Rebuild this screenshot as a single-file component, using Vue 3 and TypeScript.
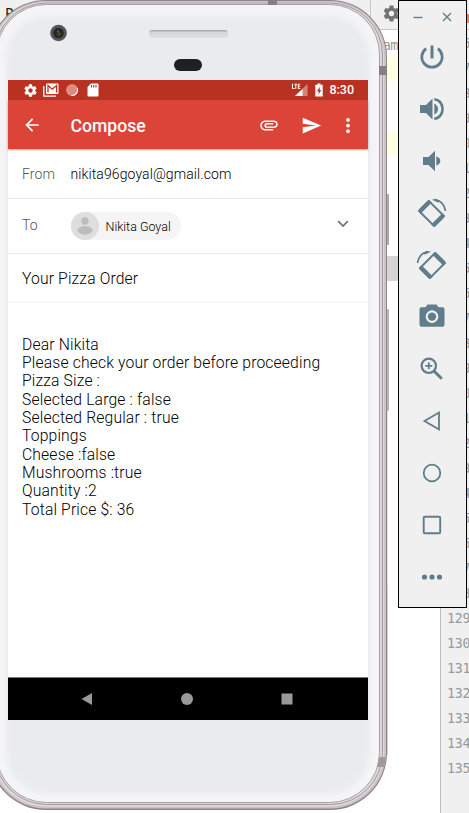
<script setup lang="ts">
const lineNumbers: number[] = Array.from({ length: 30 }, (_, i) => 106 + i)

const message: string[] = [
  'Dear Nikita',
  'Please check your order before proceeding',
  'Pizza Size :',
  'Selected Large : false',
  'Selected Regular : true',
  'Toppings',
  'Cheese :false',
  'Mushrooms :true',
  'Quantity :2',
  'Total Price $: 36',
]

const gearPath =
  'M19.43 12.98c.04-.32.07-.64.07-.98s-.03-.66-.07-.98l2.11-1.65c.19-.15.24-.42.12-.64l-2-3.46c-.12-.22-.39-.3-.61-.22l-2.49 1c-.52-.4-1.08-.73-1.69-.98l-.38-2.65C14.46 2.18 14.25 2 14 2h-4c-.25 0-.46.18-.49.42l-.38 2.65c-.61.25-1.17.59-1.69.98l-2.49-1c-.23-.09-.49 0-.61.22l-2 3.46c-.13.22-.07.49.12.64l2.11 1.65c-.04.32-.07.65-.07.98s.03.66.07.98l-2.11 1.65c-.19.15-.24.42-.12.64l2 3.46c.12.22.39.3.61.22l2.49-1c.52.4 1.08.73 1.69.98l.38 2.65c.03.24.24.42.49.42h4c.25 0 .46-.18.49-.42l.38-2.65c.61-.25 1.17-.59 1.69-.98l2.49 1c.23.09.49 0 .61-.22l2-3.46c.12-.22.07-.49-.12-.64l-2.11-1.65zM12 15.5c-1.93 0-3.5-1.57-3.5-3.5s1.57-3.5 3.5-3.5 3.5 1.57 3.5 3.5-1.57 3.5-3.5 3.5z'
</script>

<template>
  <div class="desktop">
    <section class="editor">
      <header class="editor-bar">
        <span class="tab">P</span>
        <span class="bar-tools">
          <svg class="bar-gear" viewBox="0 0 24 24"><path :d="gearPath" /></svg>
          <i class="mark"></i>
        </span>
      </header>
      <div class="code-area">
        <div class="code">
          <span class="param">am</span>
          <i class="band band-a"></i>
          <i class="band band-b"></i>
          <i class="band band-c"></i>
        </div>
        <ol class="gutter">
          <li v-for="n in lineNumbers" :key="n">{{ n }}</li>
        </ol>
      </div>
    </section>

    <section class="phone">
      <svg class="shell" viewBox="0 0 402 813">
        <defs>
          <filter id="soft" x="-5%" y="-5%" width="110%" height="110%">
            <feGaussianBlur stdDeviation="3" />
          </filter>
          <clipPath id="face"><rect x="8" y="5" width="382" height="797" rx="50" /></clipPath>
          <linearGradient id="spk" x1="0" y1="0" x2="0" y2="1">
            <stop offset="0" stop-color="#9aa0a9" />
            <stop offset=".3" stop-color="#d3d5da" />
            <stop offset="1" stop-color="#dfe0e4" />
          </linearGradient>
        </defs>
        <rect x="397" y="194" width="3" height="51" rx="1" fill="#aaa6a8" />
        <rect x="397" y="309" width="3" height="102" rx="1" fill="#b9b6b7" />
        <path d="M398.500 411V585" stroke="#e2dfe1" />
        <rect x="397" y="585" width="1.500" height="170" fill="#aaa4a7" />
        <rect x="0" y="0" width="398" height="810" rx="57" fill="#8d8689" />
        <rect x="1" y="1" width="396" height="807.500" rx="56" fill="#cbc3c6" />
        <rect x="3" y="2" width="392" height="804.500" rx="54" fill="#e0d9dc" />
        <rect x="5.500" y="3" width="388" height="801.500" rx="52" fill="#ddd7da" stroke="#a39b9e" />
        <rect x="7.500" y="4.500" width="383" height="798" rx="50" fill="#f5f5f7" stroke="#a8a2a5" />
        <path d="M279 0h9v5h-9z M390 66h8v9h-8z" fill="#877f82" />
        <path d="M390 757h7l-2 10h-7z" fill="#a19a9d" />
        <g clip-path="url(#face)">
          <rect x="17" y="16" width="364" height="778" rx="42" fill="#eaebed" filter="url(#soft)" />
        </g>
        <circle cx="69.500" cy="33" r="8.300" fill="#55565a" />
        <circle cx="69.500" cy="33" r="5.300" fill="#252629" />
        <circle cx="70" cy="34" r="2" fill="#514519" />
        <circle cx="69" cy="31.500" r="1" fill="#596270" />
        <rect x="160" y="30" width="79" height="8" rx="3" fill="url(#spk)" />
        <rect x="185" y="59" width="28" height="12" rx="6" fill="#1f2024" />
      </svg>

      <div class="screen">
        <div class="status">
          <svg class="s-gear" viewBox="0 0 24 24"><path :d="gearPath" /></svg>
          <svg class="s-mail" viewBox="0 0 16 14">
            <path d="M.8 3v10.200H13" fill="none" stroke="#fff" stroke-width="1.300" />
            <rect x="3" y=".5" width="12.500" height="10.500" rx="1" fill="#fff" />
            <path d="M5 9.500V2.500l4.300 3.700 4.300-3.700v7" fill="none" stroke="#b93221" stroke-width="1.300" />
          </svg>
          <svg class="s-dot" viewBox="0 0 14 14">
            <circle cx="7" cy="7" r="6" fill="#de8a81" />
            <path d="M12.300 5A5.700 5.700 0 0 1 6.500 12.500" fill="none" stroke="#fff" stroke-width="1.200" />
          </svg>
          <svg class="s-sd" viewBox="0 0 12 14">
            <path d="M4 .5h6.500q1 0 1 1v11q0 1-1 1h-9q-1 0-1-1V4z" fill="#fff" />
            <path d="M4.500 2v2.500M6.700 2v2.500M9 2v2.500" stroke="#b93221" stroke-width="1.100" />
          </svg>
          <svg class="s-signal" viewBox="0 0 18 14">
            <path d="M16.500 1v12H4z" fill="#d88379" />
            <path d="M11.500 6v7H4z" fill="#fff" />
            <path d="M1.500.8v4.700h2M3.300 1.300h3M4.800 1.300v4.700M9.200 1.300H7.300v4.200h1.900M7.300 3.400h1.700" fill="none" stroke="#fff" />
          </svg>
          <svg class="s-batt" viewBox="0 0 8 14">
            <path d="M2.500.5h3v1.300h2.200v11.700H.3V1.800h2.200z" fill="#fff" />
            <path d="M4.700 3.800 2 8.200h1.600V11.500L6.200 7H4.700z" fill="#b93221" />
          </svg>
          <span class="clock">8:30</span>
        </div>

        <header class="appbar">
          <svg class="back" viewBox="0 0 24 24"><path d="M20 11H7.830l5.590-5.590L12 4l-8 8 8 8 1.410-1.410L7.830 13H20v-2z" /></svg>
          <h1>Compose</h1>
          <svg class="clip" viewBox="0 0 24 24"><path d="M1.500 12.500C1.500 9.200 4.200 6.500 7.500 6.500H18c2.500 0 4.500 2 4.500 4.500s-2 4.500-4.500 4.500H9.500c-1.700 0-3-1.300-3-3s1.300-3 3-3H17v1.800H9.500c-1.500 0-1.500 2.400 0 2.400H18c1.500 0 2.700-1.200 2.700-2.700S19.500 8.300 18 8.300H7.500c-2.300 0-4.200 1.900-4.200 4.200s1.900 4.200 4.200 4.200H17v1.800H7.500c-3.300 0-6-2.700-6-6z" /></svg>
          <svg class="send" viewBox="0 0 24 24"><path d="M2.010 21L23 12 2.010 3 2 10l15 2-15 2z" /></svg>
          <svg class="more" viewBox="0 0 6 16"><circle cx="3" cy="2" r="2" /><circle cx="3" cy="8" r="2" /><circle cx="3" cy="14" r="2" /></svg>
        </header>

        <div class="row from">
          <span class="label">From</span>
          <span class="address">nikita96goyal@gmail.com</span>
        </div>
        <div class="row to">
          <span class="label">To</span>
          <span class="chip">
            <svg class="avatar" viewBox="0 0 28 28">
              <circle cx="14" cy="14" r="14" fill="#dedede" />
              <circle cx="14" cy="9" r="3.700" fill="#bdbdbd" />
              <ellipse cx="14" cy="18.200" rx="7.500" ry="4.200" fill="#bdbdbd" />
            </svg>
            <span class="chip-name">Nikita Goyal</span>
          </span>
          <svg class="chevron" viewBox="0 0 12 8"><path d="M1.200 1.200 6 6l4.800-4.800" fill="none" stroke="#707070" stroke-width="1.700" /></svg>
        </div>
        <div class="row subject">Your Pizza Order</div>
        <div class="message">
          <p v-for="line in message" :key="line">{{ line }}</p>
        </div>

        <nav class="navbar">
          <svg viewBox="0 0 12 12"><path d="M11 0v12L.5 6z" /></svg>
          <svg viewBox="0 0 12 12"><circle cx="6" cy="6" r="6" /></svg>
          <svg viewBox="0 0 12 12"><rect x=".5" y=".5" width="11" height="11" /></svg>
        </nav>
      </div>
    </section>

    <aside class="toolbar">
      <div class="window-buttons">
        <svg viewBox="0 0 10 10"><path d="M.5 5.500h9" /></svg>
        <svg viewBox="0 0 10 10"><path d="m1 1 8 8M9 1 1 9" /></svg>
      </div>
      <div class="tools">
        <svg viewBox="0 0 28 28"><path d="M14 2.500v13" class="stroke" stroke-width="3" /><path d="M8.200 5.600a10.200 10.200 0 1 0 11.600 0" class="stroke" stroke-width="2.700" /></svg>
        <svg viewBox="0 0 28 28"><path d="M2 10h6l6.500-6.500v21L8 18H2zM16.300 8.500q3.700 2 3.700 5.500t-3.700 5.500z" /><path d="M16.300 4.300c11 1 11 18.400 0 19.400" class="stroke" stroke-width="2.600" /></svg>
        <svg viewBox="0 0 28 28"><path d="M5 10h5.500l6.500-6.200v20.400L10.500 18H5zM18.300 9.200q4 1.700 4 4.800t-4 4.800z" /></svg>
        <svg viewBox="0 0 28 28"><g transform="rotate(-45 13.500 14.500)"><rect x="6.500" y="3.500" width="14" height="22" rx="1.500" class="stroke" stroke-width="2" /><path d="M5.500 3h16v4h-16zM5.500 22h16v4h-16z" /></g><path d="M17 1c5-.3 9.500 4.500 10.500 11" class="stroke" stroke-width="1.700" /><path d="m14 .7 4-1 4.500 2.500-2.500 1.200z" /></svg>
        <svg viewBox="0 0 28 28"><g transform="translate(27 0) scale(-1 1)"><g transform="rotate(-45 12.500 14.500)"><rect x="5.500" y="3.500" width="14" height="22" rx="1.500" class="stroke" stroke-width="2" /><path d="M4.500 3h16v4h-16zM4.500 22h16v4h-16z" /></g><path d="M17 1c5-.3 9.500 4.500 10.500 11" class="stroke" stroke-width="1.700" /><path d="m14 .7 4-1 4.500 2.500-2.500 1.200z" /></g></svg>
        <svg viewBox="0 0 28 28"><path fill-rule="evenodd" d="M9.500 1.500h9l2 2.800h4q2 0 2 2v15.500q0 2-2 2h-21q-2 0-2-2V6.300q0-2 2-2h4zM14 7.300a6.300 6.300 0 1 0 .01 0z" /><circle cx="14" cy="13.600" r="4.200" /></svg>
        <svg viewBox="0 0 28 28"><circle cx="10.800" cy="10.800" r="7.200" class="stroke" stroke-width="2.200" /><path d="m16.200 16.200 7.600 7.600" class="stroke" stroke-width="3" /><path d="M10.800 7.300v7M7.300 10.800h7" class="stroke" stroke-width="1.700" /></svg>
        <svg viewBox="0 0 28 28"><path d="M21 5.500v17L6.500 14z" class="stroke" stroke-width="1.800" /></svg>
        <svg viewBox="0 0 28 28"><circle cx="14" cy="14" r="8.300" class="stroke" stroke-width="1.800" /></svg>
        <svg viewBox="0 0 28 28"><rect x="5.700" y="5.700" width="16.500" height="16.500" rx="1" class="stroke" stroke-width="1.900" /></svg>
        <svg viewBox="0 0 28 28"><circle cx="6.500" cy="14" r="2.600" /><circle cx="14" cy="14" r="2.600" /><circle cx="21.500" cy="14" r="2.600" /></svg>
      </div>
    </aside>
  </div>
</template>

<style>
body { margin: 0; overflow: hidden; }
</style>

<style scoped>
.desktop { position: relative; width: 469px; height: 813px; overflow: hidden; background: #fff; font-family: Roboto, "Liberation Sans", sans-serif; }
svg { display: block; flex: none; }

.editor { display: flex; flex-direction: column; height: 813px; }
.editor-bar { box-sizing: border-box; height: 30px; background: #f0f0f0; border-bottom: 1px solid #c9c9c9; display: flex; justify-content: space-between; }
.tab { padding: 5px 0 0 5px; font: 14px/17px "DejaVu Sans Mono", monospace; color: #222; }
.bar-tools { display: flex; justify-content: space-between; width: 98px; border-left: 1px solid #c9c9c9; }
.bar-gear { width: 19px; height: 19px; margin: 4px 0 0 11px; fill: #737373; }
.mark { width: 2px; height: 9px; margin-top: 14px; background: #ee8354; }
.code-area { flex: 1; display: flex; min-height: 0; }
.code { width: 440px; position: relative; padding-top: 5px; }
.param { display: block; margin-left: 382.500px; font: 14px/20px "DejaVu Sans Mono", monospace; letter-spacing: -.7px; color: #999; }
.band { position: absolute; left: 385px; right: 0; height: 25px; background: #ffffe4; }
.band-a { top: 26px; }
.band-b { top: 101px; }
.band-c { top: 226px; background: #d4d4d4; }
.gutter { box-sizing: border-box; width: 29px; margin: 0; padding: 1px 0 0 6px; list-style: none; background: #f0f0f0; border-left: 1px solid #bdbdbd; font: 13.3px/25px "DejaVu Sans Mono", monospace; letter-spacing: -.2px; color: #999; overflow: hidden; }

.phone { position: absolute; left: -11px; top: 0; width: 402px; height: 813px; }
.shell { width: 402px; height: 813px; }
.screen { position: absolute; left: 19px; top: 80px; width: 360px; height: 640px; background: #fff; display: flex; flex-direction: column; }

.status { box-sizing: border-box; height: 20px; flex: none; background: #b93221; display: flex; align-items: center; padding: 0 14px 0 15px; color: #fff; }
.s-gear { width: 15px; height: 15px; fill: #fff; }
.s-mail { width: 16px; height: 14px; margin-left: 5px; }
.s-dot { width: 14px; height: 14px; margin-left: 6px; }
.s-sd { width: 12px; height: 14px; margin-left: 8px; }
.s-signal { width: 18px; height: 14px; margin-left: auto; }
.s-batt { width: 8px; height: 14px; margin-left: 6px; }
.clock { margin-left: 6px; font-size: 12.5px; font-weight: 500; line-height: 20px; }

.appbar { box-sizing: border-box; height: 49px; flex: none; display: flex; align-items: center; padding: 1px 17px 0 14px; background: #db4437; box-shadow: 0 1px 2px rgba(0, 0, 0, .35); }
.appbar svg { fill: #fff; }
.back { width: 20px; height: 20px; }
.appbar h1 { margin: 2px auto 0 28.500px; font-size: 17.600px; line-height: 22px; font-weight: 500; color: #fff; }
.clip { width: 20px; height: 20px; }
.send { width: 21px; height: 21px; margin-left: 22px; }
.more { width: 6px; height: 15px; margin-left: 23px; }

.row { box-sizing: border-box; flex: none; display: flex; align-items: center; padding: 0 14px; border-bottom: 1px solid #eaeaea; }
.label { width: 48.500px; font-size: 14px; font-weight: 300; color: #555; letter-spacing: .1px; }
.from { height: 50px; }
.from span { margin-top: 1px; }
.address { font-size: 14px; font-weight: 300; letter-spacing: .1px; color: #000; }
.to { height: 55px; }
.to .label { margin-top: -3px; }
.chip { display: flex; align-items: center; height: 28px; padding-right: 10px; border-radius: 14px; background: #f5f5f5; }
.avatar { width: 28px; height: 28px; }
.chip-name { margin-left: 7px; font-size: 12.500px; font-weight: 300; color: #000; }
.chevron { width: 12px; height: 8px; margin: -5px 5px 0 auto; }
.subject { height: 49px; padding-top: 1px; font-size: 15.700px; font-weight: 300; letter-spacing: .14px; color: #000; border-bottom-color: #f2f2f2; }
.message { flex: 1; padding: 32.500px 14px 0; font-size: 15.700px; font-weight: 300; line-height: 18.350px; letter-spacing: .15px; color: #000; }
.message p { margin: 0; white-space: nowrap; }

.navbar { box-sizing: border-box; height: 43px; flex: none; background: #000; border-top: 1px solid #777; display: flex; justify-content: center; align-items: center; gap: 88px; padding-right: 2px; }
.navbar svg { width: 12px; height: 12px; fill: #999; }

.toolbar { box-sizing: border-box; position: absolute; left: 398px; top: 0; width: 69px; height: 608px; background: #f0f0f0; border: 1px solid #000; }
.window-buttons { display: flex; gap: 19px; padding: 11px 0 0 14px; }
.window-buttons svg { width: 10px; height: 10px; fill: none; stroke: #607d8b; stroke-width: 1.400; }
.tools { display: flex; flex-direction: column; align-items: center; gap: 24px; padding-top: 21px; }
.tools svg { width: 28px; height: 28px; fill: #607d8b; margin-right: 2px; overflow: visible; }
.tools .stroke { fill: none; stroke: #607d8b; }
</style>
